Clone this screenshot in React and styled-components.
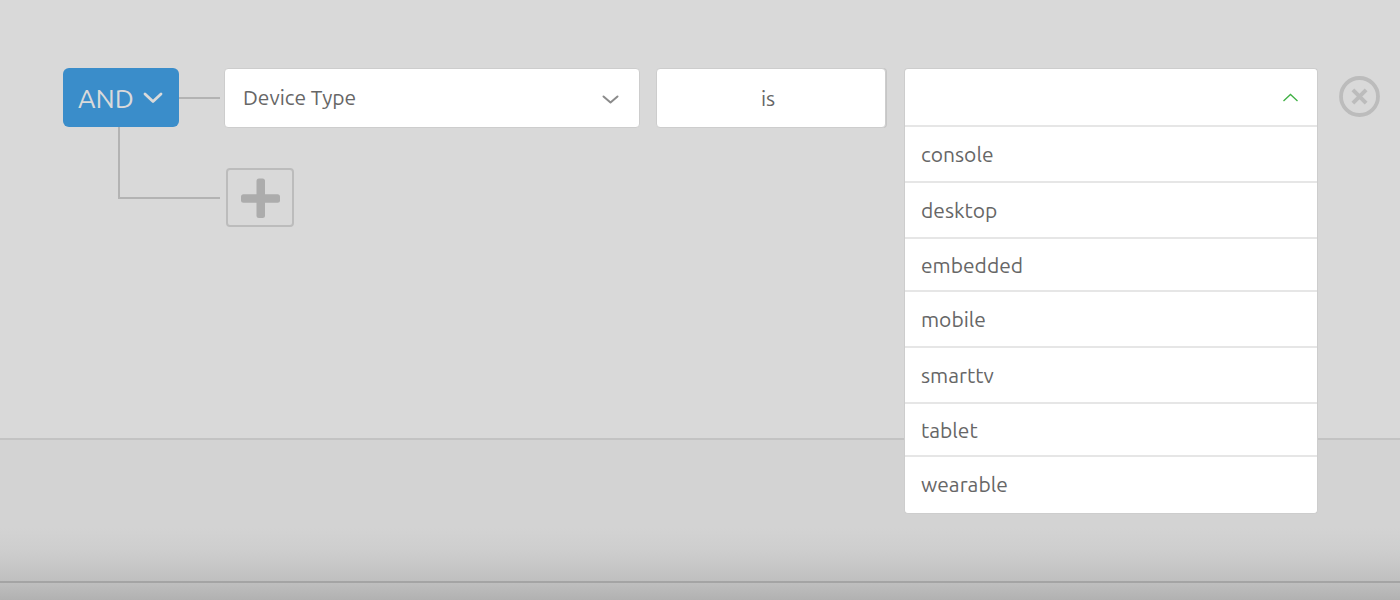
import React from "react";
import styled, { createGlobalStyle } from "styled-components";

const GlobalStyle = createGlobalStyle`
  * { box-sizing: border-box; }
  body { margin: 0; background: #d9d9d9; }
  body, button, select { font-family: Ubuntu, "Noto Sans", "Open Sans", sans-serif; }
`;

const Page = styled.div`
  min-height: 100vh;
  display: flex;
  flex-direction: column;
`;

const Conditions = styled.main`
  flex: 1;
  padding: 68px 20px 0 63px;
`;

const Rule = styled.div`
  display: flex;
  align-items: flex-start;
  height: 59px;
`;

const Operator = styled.button`
  display: flex;
  align-items: center;
  justify-content: space-between;
  flex: none;
  width: 116px;
  height: 59px;
  padding: 0 16px 0 15px;
  border: 0;
  border-radius: 6px;
  background: #3a8dca;
  color: #dadada;
  font-size: 27px;
`;

const Link = styled.span`
  flex: none;
  width: 41px;
  height: 2px;
  margin: 29px 4px 0 0;
  background: #b3b3b3;
`;

const Field = styled.div`
  position: relative;
  flex: ${(p) => p.$grow} 1 0;
  min-width: 0;
  height: 60px;
  margin-right: ${(p) => p.$gap}px;
`;

const box = `
  width: 100%;
  border: 1px solid #cdcdcd;
  border-radius: 4px;
  background: #fff;
  color: #666;
  font-size: 21px;
`;

const Select = styled.select`
  ${box}
  height: 60px;
  padding: ${(p) => (p.$centered ? "0 22px 0 16px" : "0 18px 2px")};
  appearance: none;
  text-align-last: ${(p) => (p.$centered ? "center" : "left")};
  box-shadow: ${(p) => (p.$centered ? "1px 0 0 #c6c6c6" : "none")};
`;

const Indicator = styled.svg`
  position: absolute;
  top: 26px;
  right: 20px;
  pointer-events: none;
`;

const Combo = styled.button`
  ${box}
  display: flex;
  align-items: center;
  justify-content: flex-end;
  height: 58px;
  padding: 0 18px;
  border-bottom: 0;
  border-radius: 4px 4px 0 0;
`;

const Menu = styled.ul`
  ${box}
  position: absolute;
  top: 57px;
  left: 0;
  z-index: 1;
  margin: 0;
  padding: 0;
  border-top: 0;
  border-radius: 0 0 4px 4px;
  list-style: none;
`;

const Option = styled.li`
  display: flex;
  align-items: center;
  height: 56px;
  padding: 0 16px;
  border-top: 2px solid #e6e6e6;

  &:nth-child(3n) { height: 53px; }
  &:last-child { height: 58px; padding-bottom: 2px; }
`;

const Remove = styled.button`
  flex: none;
  width: 41px;
  height: 41px;
  margin-top: 8px;
  padding: 0;
  border: 0;
  background: none;
  svg { display: block; }
`;

const AddRow = styled.div`
  display: flex;
  padding-left: 55px;
`;

const Elbow = styled.span`
  width: 102px;
  height: 72px;
  margin-right: 6px;
  border: solid #b3b3b3;
  border-width: 0 0 2px 2px;
`;

const Add = styled.button`
  display: flex;
  align-items: center;
  justify-content: center;
  width: 68px;
  height: 59px;
  margin-top: 41px;
  padding: 0;
  border: 2px solid #bcbcbc;
  border-radius: 4px;
  background: none;
`;

const Footer = styled.footer`
  height: 143px;
  border-top: 2px solid #c3c3c3;
  background: linear-gradient(#d3d3d3 0, #d3d3d3 88px, #cecece 110px, #c7c7c7 126px, #bfbfbf 141px);
`;

const Edge = styled.div`
  height: 19px;
  border-top: 2px solid #a4a4a4;
  background: linear-gradient(#bfbfbf, #b1b1b1);
`;

const options = ["console", "desktop", "embedded", "mobile", "smarttv", "tablet", "wearable"];

export default function App() {
  return (
    <Page>
      <GlobalStyle />
      <Conditions>
        <Rule>
          <Operator type="button">
            AND
            <svg width="20" height="12" viewBox="0 0 20 12" fill="none" stroke="#dadada" strokeWidth="2.8" strokeLinecap="round" strokeLinejoin="round" aria-hidden="true">
              <path d="M2 2 10 9.5 18 2" />
            </svg>
          </Operator>
          <Link />
          <Field $grow={416} $gap={16}>
            <Select aria-label="Attribute" defaultValue="Device Type">
              <option>Device Type</option>
            </Select>
            <Indicator width="18" height="12" viewBox="0 0 18 12" fill="none" stroke="#8b8b8b" strokeWidth="2" strokeLinecap="round" strokeLinejoin="round" aria-hidden="true">
              <path d="M1.5 2.5 8.5 8.5 15.5 2.5" />
            </Indicator>
          </Field>
          <Field $grow={230} $gap={18}>
            <Select $centered aria-label="Comparison" defaultValue="is">
              <option>is</option>
            </Select>
          </Field>
          <Field $grow={414} $gap={21}>
            <Combo type="button" aria-label="Value" aria-haspopup="listbox" aria-expanded="true" aria-controls="values">
              <svg width="16" height="10" viewBox="0 0 16 10" fill="none" stroke="#3fb044" strokeWidth="1.3" aria-hidden="true">
                <path d="M0.5 8 7.5 1.5 14.5 8" />
              </svg>
            </Combo>
            <Menu id="values" role="listbox" aria-label="Values">
              {options.map((name) => (
                <Option key={name} role="option" aria-selected="false">{name}</Option>
              ))}
            </Menu>
          </Field>
          <Remove type="button" aria-label="Remove condition">
            <svg width="41" height="41" viewBox="0 0 41 41" fill="none" stroke="#bcbcbc" strokeWidth="3.8" aria-hidden="true">
              <circle cx="20.5" cy="20.5" r="18.5" />
              <path d="M13.9 13.9 27.1 27.1M27.1 13.9 13.9 27.1" strokeWidth="4" />
            </svg>
          </Remove>
        </Rule>
        <AddRow>
          <Elbow />
          <Add type="button" aria-label="Add condition">
            <svg width="40" height="40" viewBox="0 0 40 40" fill="#acacac" aria-hidden="true">
              <rect x="16.5" y="0.5" width="8.5" height="39.5" rx="2.5" />
              <rect x="1" y="16.2" width="39" height="8.5" rx="2.5" />
            </svg>
          </Add>
        </AddRow>
      </Conditions>
      <Footer />
      <Edge />
    </Page>
  );
}
